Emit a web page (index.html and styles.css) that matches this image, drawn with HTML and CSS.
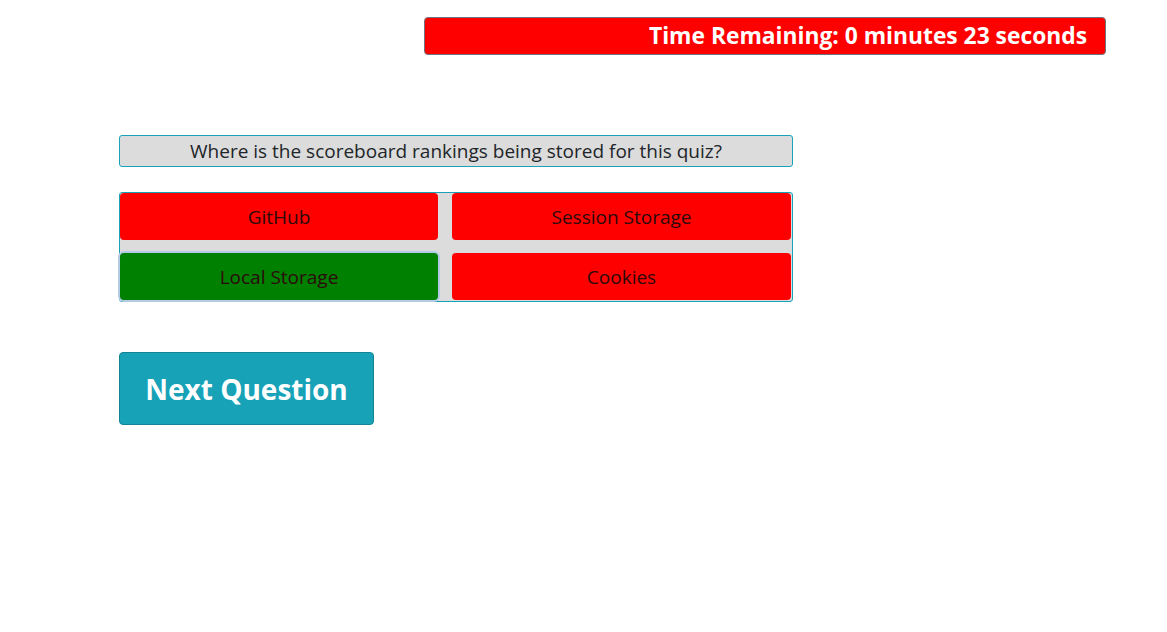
FILE: index.html
```html
<!DOCTYPE html>
<html>
<head>
<meta charset="utf-8">
<link rel="stylesheet" href="styles.css">
</head>
<body>
<header class="top">
  <div class="timer">Time Remaining: 0 minutes 23 seconds</div>
</header>
<main class="quiz">
  <div class="question">Where is the scoreboard rankings being stored for this quiz?</div>
  <div class="answers">
    <button class="answer wrong">GitHub</button>
    <button class="answer wrong">Session Storage</button>
    <button class="answer right">Local Storage</button>
    <button class="answer wrong">Cookies</button>
  </div>
  <button class="next">Next Question</button>
</main>
</body>
</html>
```
FILE: styles.css
```css
html, body {
  margin: 0;
  padding: 0;
  background: #fff;
  font-family: "Open Sans", "Noto Sans", sans-serif;
  color: #212529;
}
.top {
  display: flex;
  justify-content: flex-end;
  padding: 17px 61px 0 0;
}
.timer {
  width: 662px;
  height: 36px;
  background: #ff0000;
  border: 1px solid #6c757d;
  border-radius: 4px;
  color: #fff;
  font-weight: 700;
  font-size: 22.8px;
  line-height: 36px;
  text-align: right;
  padding-right: 18px;
}
.quiz {
  width: 674px;
  margin-left: 119px;
  padding-top: 80px;
  display: flex;
  flex-direction: column;
  align-items: flex-start;
}
.question {
  box-sizing: border-box;
  width: 674px;
  height: 32px;
  background: #dcdcdc;
  border: 1px solid #17a2b8;
  border-radius: 3px;
  text-align: center;
  font-size: 19px;
  line-height: 30px;
  color: #212529;
}
.answers {
  box-sizing: border-box;
  width: 674px;
  margin-top: 25px;
  background: #dcdcdc;
  border: 1px solid #17a2b8;
  border-radius: 3px;
  display: grid;
  grid-template-columns: 318px 339px;
  column-gap: 14px;
  row-gap: 13px;
  padding: 0 0 1px 0;
}
.answer {
  height: 47px;
  border: none;
  border-radius: 4px;
  font-family: inherit;
  font-size: 19px;
  color: #2b0a0a;
  cursor: pointer;
}
.wrong { background: #ff0000; }
.right {
  background: #008000;
  box-shadow: 0 0 0 2px #b3cbe3;
}
.next {
  margin-top: 50px;
  width: 255px;
  height: 73px;
  background: #17a2b8;
  border: 1px solid #138496;
  border-radius: 4px;
  color: #fff;
  font-family: inherit;
  font-weight: 700;
  font-size: 28px;
}
```
